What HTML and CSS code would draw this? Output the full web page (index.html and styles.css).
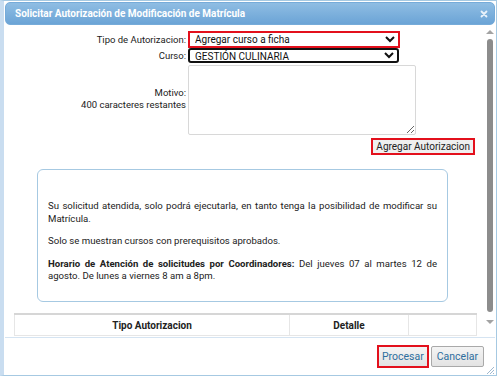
FILE: index.html
```html
<!DOCTYPE html>
<html lang="es">
<head>
<meta charset="utf-8">
<title>Solicitar Autorización</title>
<link rel="stylesheet" href="styles.css">
</head>
<body>
<div class="dialog">
  <div class="titlebar">
    <span class="title">Solicitar Autorización de Modificación de Matrícula</span>
    <span class="close"><svg width="8" height="8" viewBox="0 0 8 8"><path d="M1.5 1.5 L6.5 6.5 M6.5 1.5 L1.5 6.5" stroke="#e9f2fb" stroke-width="1.8" stroke-linecap="round"/></svg></span>
  </div>
  <div class="body">
    <div class="content">
      <div class="form">
        <label class="lbl">Tipo de Autorizacion:</label>
        <div class="field"><select class="sel sel-red"><option>Agregar curso a ficha</option></select></div>
        <label class="lbl">Curso:</label>
        <div class="field"><select class="sel sel-focus"><option>GESTIÓN CULINARIA</option></select></div>
        <div class="lbl lbl-multi">Motivo:<br>400 caracteres restantes</div>
        <div class="field"><textarea class="motivo"></textarea></div>
        <div class="actions"><button class="btn btn-add">Agregar Autorizacion</button></div>
      </div>
      <div class="info">
        <p>Su solicitud atendida, solo podrá ejecutarla, en tanto tenga la posibilidad de modificar su Matrícula.</p>
        <p>Solo se muestran cursos con prerequisitos aprobados.</p>
        <p><span class="jl"><b>Horario de Atención de solicitudes por Coordinadores:</b> Del jueves 07 al martes 12 de</span> agosto. De lunes a viernes 8 am a 8pm.</p>
      </div>
      <table class="grid">
        <thead>
          <tr><th class="c1">Tipo Autorizacion</th><th class="c2">Detalle</th><th class="c3"></th></tr>
        </thead>
      </table>
    </div>
    <div class="scrollbar">
      <span class="arrow up"></span>
      <span class="thumb"></span>
      <span class="arrow down"></span>
    </div>
  </div>
  <div class="buttonpane">
    <button class="pbtn pbtn-red">Procesar</button>
    <button class="pbtn">Cancelar</button>
    <svg class="grip" width="10" height="10" viewBox="0 0 10 10"><path d="M9 2 L2 9 M9 5 L5 9 M9 8 L8 9" stroke="#9fb8cf" stroke-width="1"/></svg>
  </div>
</div>
</body>
</html>
```
FILE: styles.css
```css
html, body {
  margin: 0;
  padding: 0;
  background: #ffffff;
}
body {
  width: 497px;
  height: 376px;
  overflow: hidden;
  font-family: Roboto, "Liberation Sans", sans-serif;
  font-size: 10px;
  color: #222222;
}
.dialog {
  box-sizing: border-box;
  width: 497px;
  height: 376px;
  border: 1px solid #a6c9e2;
  border-left: 4px solid #c9ddf0;
  padding: 1px 1px 0 1px;
  display: flex;
  flex-direction: column;
  background: #ffffff;
  position: relative;
}
.titlebar {
  box-sizing: border-box;
  height: 23px;
  flex: none;
  display: flex;
  align-items: center;
  justify-content: space-between;
  padding: 0 6px 0 9px;
  background: linear-gradient(#8fbde3, #6ba4d6);
  border: 1px solid #76abd9;
  border-radius: 5px;
}
.title {
  color: #ffffff;
  font-weight: bold;
  font-size: 10px;
}
.close {
  display: flex;
  width: 8px;
  height: 8px;
}
.body {
  flex: 1;
  display: flex;
  min-height: 0;
}
.content {
  flex: 1;
  overflow: hidden;
  padding: 6px 0 0 9px;
}
.form {
  width: 461px;
  display: grid;
  grid-template-columns: 172px 1fr;
  column-gap: 2px;
  align-items: center;
}
.lbl {
  text-align: right;
  line-height: 12px;
  font-size: 9.5px;
}
.field {
  display: flex;
}
.sel {
  box-sizing: border-box;
  font-family: Roboto, "Liberation Sans", sans-serif;
  font-size: 10px;
  color: #111111;
  background: #ffffff;
  padding: 0 1px;
  margin: 0;
}
.sel-red {
  width: 212px;
  height: 17px;
  border: 2px solid #e3101c;
  border-radius: 0;
}
.sel-focus {
  width: 211px;
  height: 15px;
  border: 2px solid #111111;
  border-radius: 3px;
  margin-top: 0;
  line-height: 11px;
}
.motivo {
  box-sizing: border-box;
  width: 228px;
  height: 70px;
  margin: 2px 0 0 0;
  border: 1px solid #d8d8d8;
  border-radius: 2px;
  font-family: Roboto, "Liberation Sans", sans-serif;
  font-size: 10px;
}
.actions {
  grid-column: 1 / 3;
  display: flex;
  justify-content: flex-end;
  margin-top: 3px;
}
.btn-add {
  box-sizing: border-box;
  height: 17px;
  padding: 0 3px;
  border: 2px solid #e3101c;
  background: #efefef;
  font-family: Roboto, "Liberation Sans", sans-serif;
  font-size: 10px;
  color: #222222;
  line-height: 11px;
}
.info {
  box-sizing: border-box;
  width: 411px;
  height: 133px;
  margin: 14px 0 0 23px;
  padding: 30px 10px 0 10px;
  border: 1px solid #a6c9e2;
  border-radius: 6px;
  text-align: justify;
  line-height: 12.5px;
  color: #222222;
  font-size: 9.6px;
}
.info p {
  margin: 0 0 10px 0;
}
.info .jl {
  display: block;
  text-align-last: justify;
  word-spacing: -1px;
}
.grid {
  margin-top: 11px;
  width: 463px;
  border-collapse: collapse;
  border-top: 2px solid #d6d6d6;
}
.grid th {
  height: 20px;
  padding: 0;
  border: 1px solid #e6e6e6;
  font-weight: bold;
  font-size: 10px;
  color: #222222;
  text-align: center;
}
.grid .c1 { width: 274px; }
.grid .c2 { width: 118px; }
.scrollbar {
  flex: none;
  width: 10px;
  display: flex;
  flex-direction: column;
  align-items: center;
}
.arrow {
  width: 0;
  height: 0;
  border-left: 4px solid transparent;
  border-right: 4px solid transparent;
}
.arrow.up {
  margin-top: 5px;
  border-bottom: 4px solid #a3a3a3;
}
.thumb {
  width: 6px;
  height: 273px;
  margin-top: 5px;
  background: #8c8c8c;
  border-radius: 3px;
}
.arrow.down {
  margin-top: 8px;
  border-top: 4px solid #a3a3a3;
}
.buttonpane {
  box-sizing: border-box;
  height: 38px;
  flex: none;
  border-top: 1px solid #d5e4f2;
  display: flex;
  justify-content: flex-end;
  align-items: center;
  gap: 2px;
  padding: 0 11px 1px 0;
  position: relative;
}
.pbtn {
  box-sizing: border-box;
  height: 21px;
  padding: 0 5px;
  border: 1px solid #a9a9a9;
  border-radius: 2px;
  background: linear-gradient(#f4f4f4, #e3e3e3);
  font-family: Roboto, "Liberation Sans", sans-serif;
  font-size: 10.5px;
  color: #2e6e9e;
}
.pbtn-red {
  height: 23px;
  padding: 0 3px;
  border: 2px solid #e3101c;
  border-radius: 0;
}
.grip {
  position: absolute;
  right: 0;
  bottom: 0;
}
```
